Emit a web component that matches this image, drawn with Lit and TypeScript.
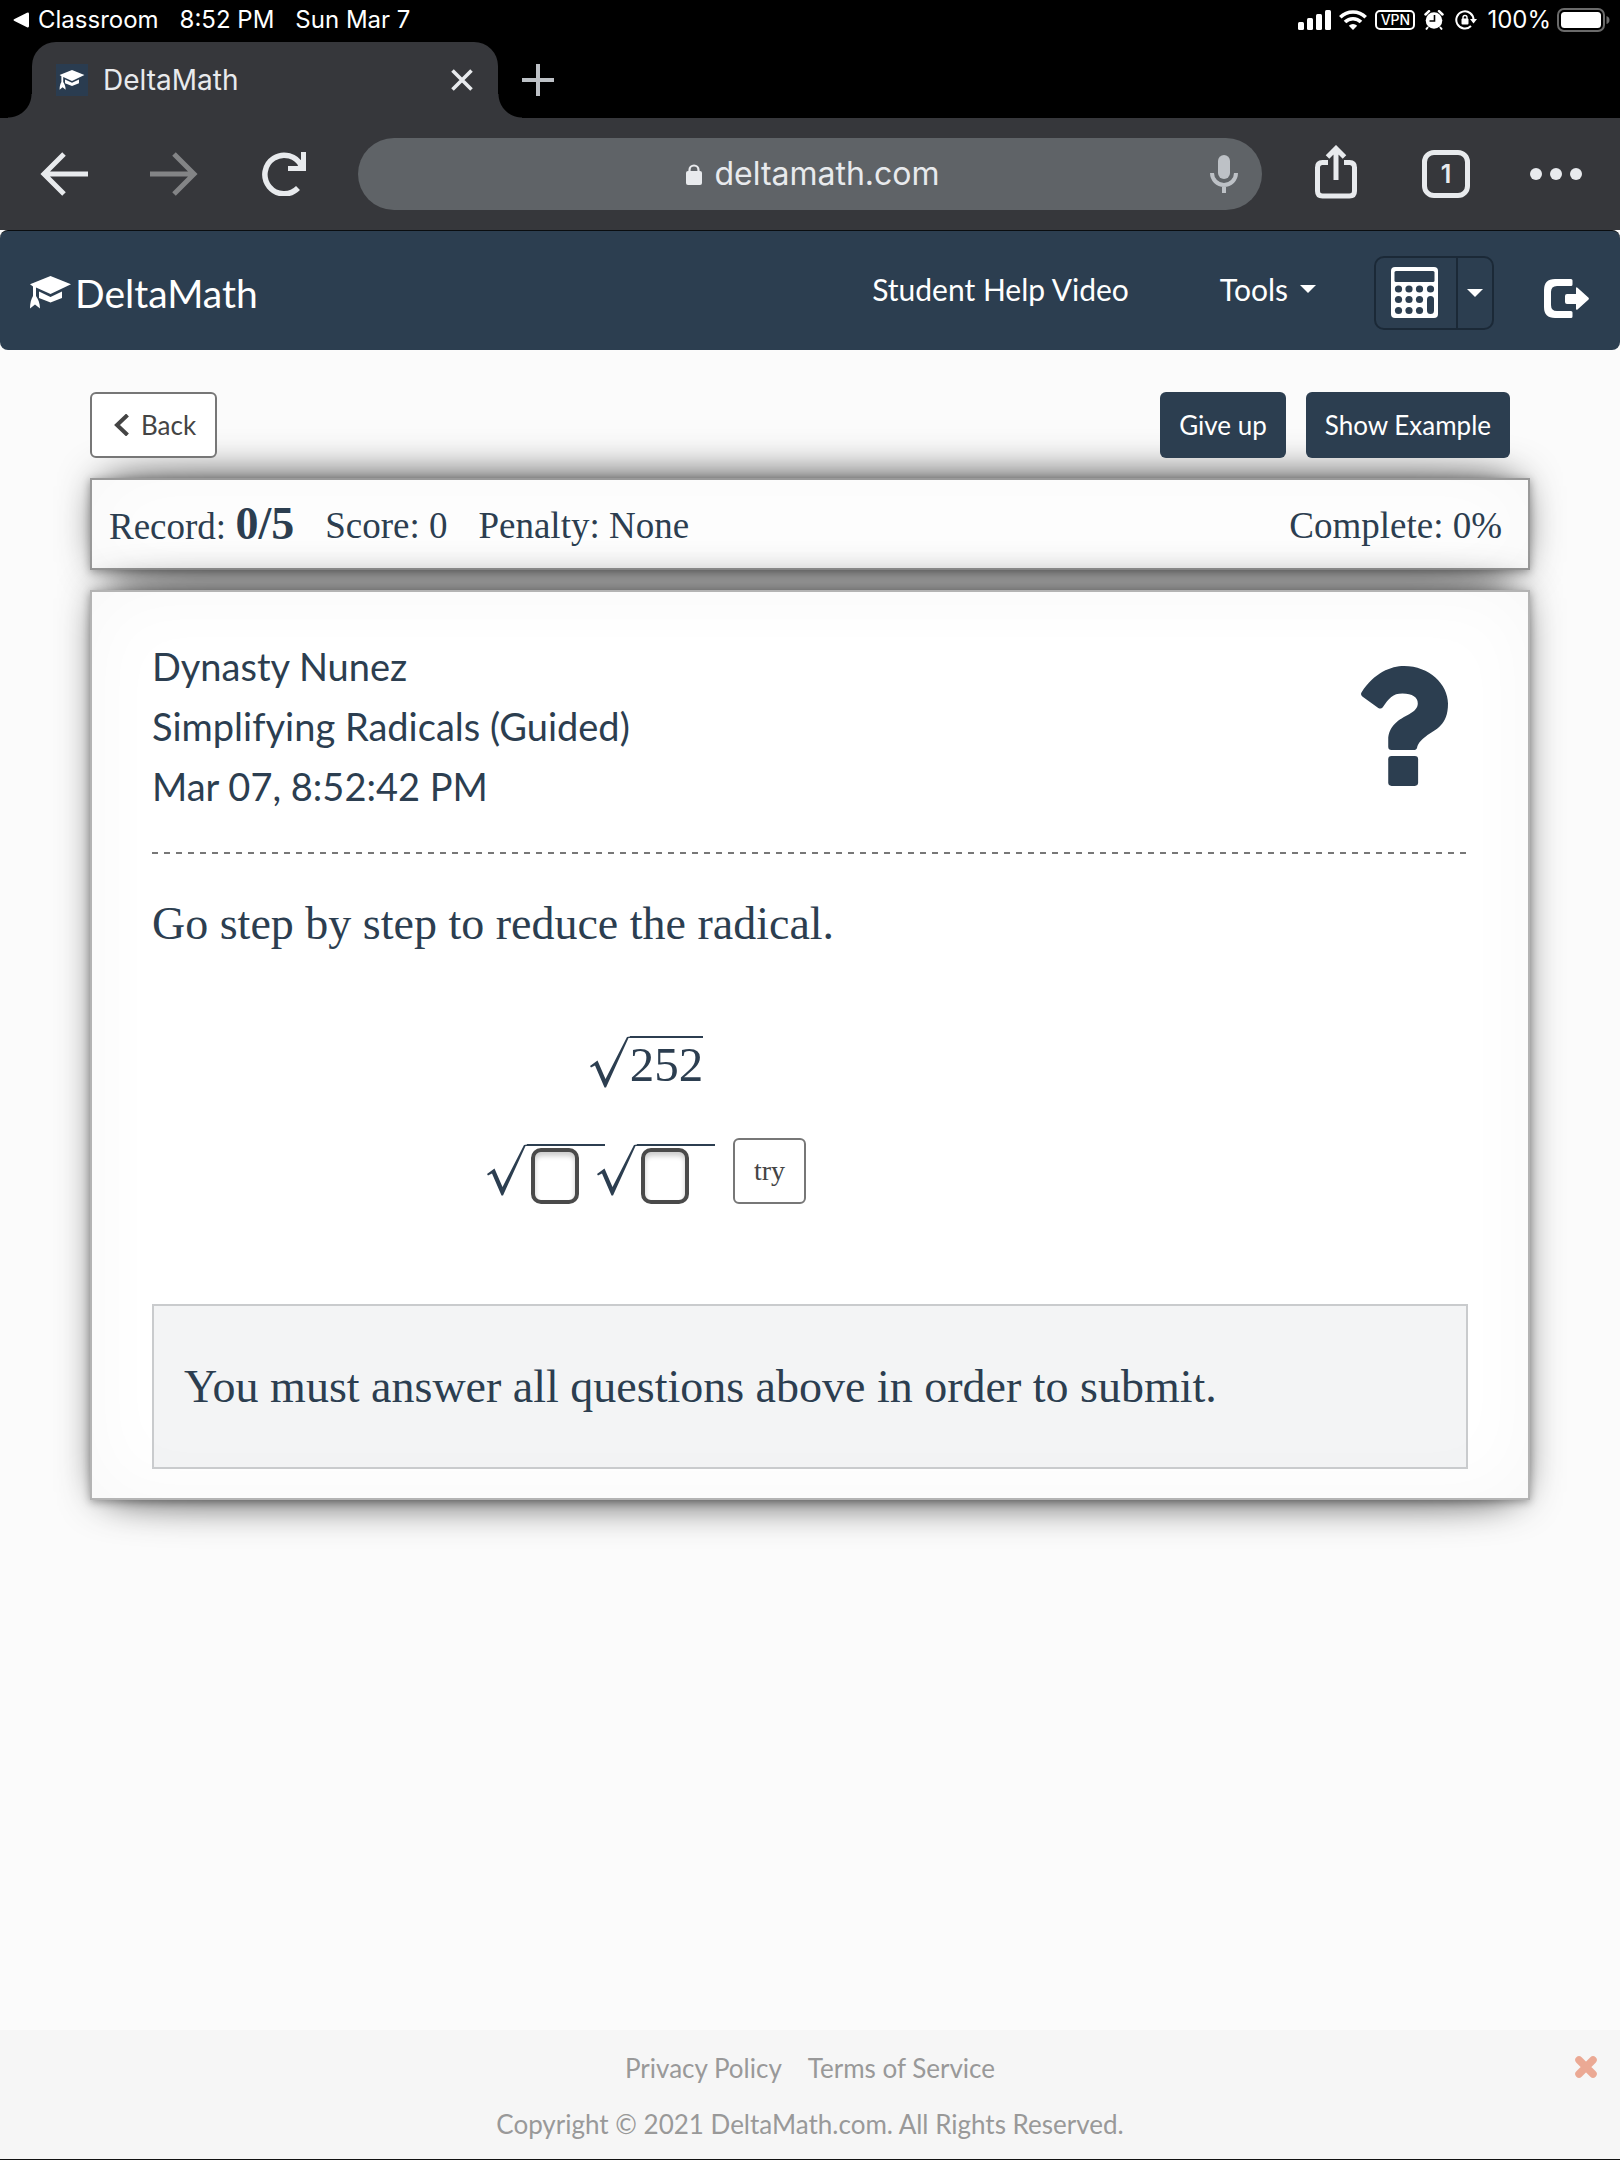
import { LitElement, html, css, svg } from "lit";
import { customElement, property } from "lit/decorators.js";

const cap = svg`
  <path d="M20.5 0 41 8.3 20.5 18 6 11.5V20c2 3 4 7 4 12.5L5 28.5 0 32.5C0 27 1.200 23 3 20V10.500L0 8.300Z"/>
  <path d="M9 15.500 20.500 21 32 15.500V22L20.500 26.500 9 22Z"/>`;

@customElement("browser-chrome")
export class BrowserChrome extends LitElement {
  static styles = css`
    :host { display: block; background: #000; color: #fff; font-family: Inter, "Liberation Sans", sans-serif; }
    * { box-sizing: border-box; }
    button { background: none; border: 0; padding: 0; margin: 0; color: inherit; font: inherit; }
    svg { display: block; flex: none; }
    .status { display: flex; align-items: center; height: 42px; padding: 0 10px 2px 13px; font-size: 24px; line-height: 28px; }
    .back-app { display: flex; align-items: center; gap: 9px; }
    .clock { margin-left: 21px; }
    .date { margin-left: 21px; }
    .indicators { display: flex; align-items: center; margin-left: auto; }
    .wifi { margin-left: 8px; }
    .vpn { display: flex; align-items: center; justify-content: center; width: 40px; height: 20px; margin-left: 8px; border: 2px solid #fff; border-radius: 5px; font-size: 14px; font-weight: 500; }
    .alarm { margin-left: 9px; }
    .rotation { margin-left: 11px; }
    .percent { margin-left: 10px; }
    .battery { margin-left: 6px; }
    .strip { display: flex; align-items: flex-end; padding-left: 8px; }
    .flare { width: 24px; height: 24px; }
    .flare.left { background: radial-gradient(circle at 0 0, #000 23px, #36373b 24px); }
    .flare.right { background: radial-gradient(circle at 100% 0, #000 23px, #36373b 24px); }
    .tab { display: flex; align-items: center; width: 466px; height: 76px; padding: 0 25px 0 24px; background: #36373b; border-radius: 24px 24px 0 0; color: #e8eaed; font-size: 28px; }
    .favicon { display: flex; align-items: center; justify-content: center; width: 32px; height: 32px; margin-right: 15px; background: #2a3c50; }
    .close { margin-left: auto; }
    .plus { align-self: center; }
    .toolbar { display: flex; align-items: center; height: 112px; padding: 0 9px; background: #36373b; color: #e8eaed; }
    .tool { display: flex; align-items: center; justify-content: center; width: 110px; height: 72px; flex: none; }
    .tool:disabled { color: #838486; }
    .omnibox { display: flex; flex: 1; align-items: center; height: 72px; margin: 0 19px; border-radius: 36px; background: #5f6367; padding-left: 82px; }
    .address { display: flex; flex: 1; align-items: center; justify-content: center; gap: 12px; font-size: 32px; line-height: 40px; }
    .mic { display: flex; justify-content: center; width: 76px; color: #bdc1c6; }
    .count { display: flex; align-items: center; justify-content: center; width: 48px; height: 48px; border: 5px solid currentColor; border-radius: 12px; font-size: 25px; font-weight: 600; }
  `;

  render() {
    return html`
      <div class="status">
        <span class="back-app">
          <svg width="16" height="16" viewBox="0 0 16 16" fill="#fff"><path d="M1.500 7 14 .7q2-.8 2 1.200v12.200q0 2-2 1.200L1.500 9q-2-1 0-2Z"/></svg>
          Classroom
        </span>
        <span class="clock">8:52 PM</span>
        <span class="date">Sun Mar 7</span>
        <span class="indicators">
          <svg width="33" height="20" viewBox="0 0 33 20" fill="#fff"><rect y="12" width="6" height="8" rx="1.500"/><rect x="9" y="8" width="6" height="12" rx="1.500"/><rect x="18" y="4" width="6" height="16" rx="1.500"/><rect x="27" width="6" height="20" rx="1.500"/></svg>
          <svg class="wifi" width="28" height="20" viewBox="0 0 28 20" fill="none" stroke="#fff" stroke-width="3.600"><path d="M1.300 7.300a18 18 0 0 1 25.400 0M6 12a11.300 11.300 0 0 1 16 0"/><path d="M14 20 9.800 15.800a6 6 0 0 1 8.400 0Z" fill="#fff" stroke="none"/></svg>
          <span class="vpn">VPN</span>
          <svg class="alarm" width="20" height="20" viewBox="0 0 20 20"><circle cx="10" cy="10.500" r="8.300" fill="#fff"/><path d="M1.500 4.500 5 1.200M18.500 4.500 15 1.200" stroke="#fff" stroke-width="2.500" stroke-linecap="round"/><path d="m4 17-2 2.500M16 17l2 2.500" stroke="#fff" stroke-width="2"/><path d="M10.500 5v6H5.500" fill="none" stroke="#000" stroke-width="1.600"/></svg>
          <svg class="rotation" width="22" height="20" viewBox="0 0 22 20" fill="none" stroke="#fff" stroke-width="2"><path d="M16 16a8.600 8.600 0 1 1 2.500-6"/><path d="M15 9h7l-3.500 4.500Z" fill="#fff" stroke="none"/><rect x="6.500" y="8.500" width="7" height="6" rx="1" fill="#fff" stroke="none"/><path d="M8 9V7.500a2 2 0 0 1 4 0V9" stroke-width="1.400"/></svg>
          <span class="percent">100%</span>
          <svg class="battery" width="53" height="24" viewBox="0 0 53 24"><rect x="1" y="1" width="46" height="22" rx="6" fill="none" stroke="#6a6a6a" stroke-width="2"/><rect x="4" y="4" width="40" height="16" rx="3.500" fill="#fff"/><path d="M49.500 8v8q3-1 3-4t-3-4Z" fill="#6a6a6a"/></svg>
        </span>
      </div>
      <div class="strip">
        <span class="flare left"></span>
        <div class="tab">
          <span class="favicon"><svg width="26" height="20" viewBox="0 0 41 33" fill="#fff">${cap}</svg></span>
          <span>DeltaMath</span>
          <button class="close" aria-label="Close tab"><svg width="22" height="22" viewBox="0 0 22 22" stroke="currentColor" stroke-width="3.600"><path d="m1.500 1.500 19 19M20.500 1.500l-19 19"/></svg></button>
        </div>
        <span class="flare right"></span>
        <button class="plus" aria-label="New tab"><svg width="32" height="32" viewBox="0 0 32 32" stroke="#bdc1c6" stroke-width="4"><path d="M16 0v32M0 16h32"/></svg></button>
      </div>
      <div class="toolbar">
        <button class="tool" aria-label="Back"><svg width="48" height="44" viewBox="0 0 48 44" fill="none" stroke="currentColor" stroke-width="5"><path d="M48 22H4M24 2 4 22l20 20"/></svg></button>
        <button class="tool" aria-label="Forward" disabled><svg width="48" height="44" viewBox="0 0 48 44" fill="none" stroke="currentColor" stroke-width="5"><path d="M0 22h44M24 2l20 20-20 20"/></svg></button>
        <button class="tool" aria-label="Reload"><svg width="44" height="44" viewBox="0 0 44 44" fill="none" stroke="currentColor" stroke-width="5.500"><path d="M36 36A19.300 19.300 0 1 1 39.500 14"/><path d="M44 0v19H26v-5h9.500L39 11V0Z" fill="currentColor" stroke="none"/></svg></button>
        <div class="omnibox">
          <button class="address">
            <svg width="16" height="21" viewBox="0 0 16 21"><rect y="7" width="16" height="14" rx="2" fill="currentColor"/><path d="M3.500 8V6a4.500 4.500 0 0 1 9 0v2" fill="none" stroke="currentColor" stroke-width="2.200"/></svg>
            deltamath.com
          </button>
          <button class="mic" aria-label="Voice search"><svg width="28" height="38" viewBox="0 0 28 38" fill="none" stroke="currentColor" stroke-width="4"><rect x="8" width="12" height="24" rx="6" fill="currentColor" stroke="none"/><path d="M2 18a12 12 0 0 0 24 0M14 30v8"/></svg></button>
        </div>
        <button class="tool" aria-label="Share"><svg width="42" height="58" viewBox="0 0 42 58" fill="none" stroke="currentColor" stroke-width="5"><path d="M13 17.500H7.500q-5 0-5 5V46q0 5 5 5h27q5 0 5-5V22.500q0-5-5-5H29M21 35V4M12.500 12 21 3.500 29.500 12"/></svg></button>
        <button class="tool" aria-label="Tabs"><span class="count">1</span></button>
        <button class="tool" aria-label="More"><svg width="52" height="12" viewBox="0 0 52 12" fill="currentColor"><circle cx="6" cy="6" r="6"/><circle cx="26" cy="6" r="6"/><circle cx="46" cy="6" r="6"/></svg></button>
      </div>
    `;
  }
}

@customElement("radical-sign")
export class RadicalSign extends LitElement {
  static styles = css`
    :host { display: inline-flex; align-items: flex-start; }
    svg { display: block; flex: none; }
    .under { display: block; border-top: 2px solid #2c3e50; }
  `;
  render() {
    return html`<svg width="40" height="52" viewBox="0 0 40 52"><path d="M0 30 7.500 24.500 15.500 43 37 1l3-.5V2h-1.500L16 51.500h-1.500L5 29.500 1 31.500Z" fill="#2c3e50"/></svg><span class="under"><slot></slot></span>`;
  }
}

@customElement("app-root")
export class AppRoot extends LitElement {
  @property() student = "Dynasty Nunez";

  static styles = css`
    :host { display: flex; flex-direction: column; min-height: 100vh; box-sizing: border-box; background: #fbfbfb; color: #2c3e50; border-bottom: 1px solid #111; font-family: Lato, "Open Sans", sans-serif; }
    * { box-sizing: border-box; }
    button { margin: 0; font: inherit; }
    a { color: inherit; text-decoration: none; }
    svg { display: block; flex: none; }
    .navbar { display: flex; align-items: center; min-height: 120px; padding: 0 31px 0 30px; border-top: 1px solid #0a0d10; background: #2c3e50; border-radius: 8px; color: #fff; font-size: 30px; line-height: 36px; }
    .brand { display: flex; align-items: center; gap: 4px; margin-right: auto; font-size: 39px; line-height: 48px; padding-top: 4px; }
    .plain { display: flex; align-items: center; background: none; border: 0; padding: 0; color: inherit; }
    .link { padding-bottom: 3px; }
    .tools { gap: 12px; margin-left: 91px; }
    .calc { display: flex; height: 74px; margin: 4px 0 0 58px; border: 2px solid #1b2937; border-radius: 10px; }
    .calc-main { justify-content: center; width: 82px; padding-right: 18px; padding-left: 15px; border-right: 2px solid #1b2937; }
    .calc-more { justify-content: center; width: 34px; }
    .logout { margin-left: 50px; padding-top: 16px; }
    .page { width: 100%; padding: 42px 90px 0; }
    .actions { display: flex; gap: 20px; padding-right: 20px; margin-bottom: 20px; position: relative; z-index: 1; }
    .btn { display: flex; align-items: center; gap: 12px; height: 66px; padding: 0 19px; border: 0; border-radius: 6px; background: #2c3e50; color: #fff; font-size: 26px; line-height: 32px; }
    .btn.outline { border: 2px solid #777; background: #fff; color: #444; padding: 0 19px 0 22px; }
    .back { margin-right: auto; }
    .sheet { position: relative; z-index: 0; }
    .sheet::before { content: ""; position: absolute; z-index: -1; inset: 0 12px; border-radius: 100px / 10px; box-shadow: 0 0 40px rgba(0, 0, 0, 0.8); }
    .paper { border: 2px solid #999; background: #fff; box-shadow: 0 2px 8px rgba(0, 0, 0, 0.3), 0 0 80px rgba(0, 0, 0, 0.03) inset; }
    .record { display: flex; align-items: center; gap: 31px; min-height: 92px; padding: 3px 26px 0 17px; font-family: Georgia, "Liberation Serif", serif; font-size: 37px; line-height: 44px; }
    .record strong { font-size: 46px; }
    .complete { margin-left: auto; }
    .question { margin-top: 20px; padding: 44px 60px 29px; border-color: #b4b4b4; }
    .heading { display: flex; align-items: center; justify-content: space-between; padding: 0 20px 36px 0; }
    .meta { font-size: 38px; font-weight: 400; line-height: 60px; }
    .rule { height: 2px; background: repeating-linear-gradient(90deg, #777 0 6px, transparent 6px 12px); }
    .prompt { margin: 40px 0 80px; font-family: Georgia, "Liberation Serif", serif; font-size: 46px; font-weight: 400; line-height: 60px; }
    .math { display: flex; flex-direction: column; align-items: center; width: 75%; padding-left: 2px; font-family: "Liberation Serif", serif; }
    .number { height: 104px; padding-top: 2px; font-size: 49px; line-height: 54px; }
    .attempt { display: flex; align-items: flex-start; }
    .factors { display: flex; padding-top: 6px; }
    .second { margin-left: -8px; }
    .box { display: block; width: 48px; height: 56px; margin: 2px 26px 0 4px; padding: 0; border: 4px solid #4a4a4a; border-radius: 10px; background: #fff; box-shadow: inset 0 4px 5px rgba(0, 0, 0, 0.2); color: inherit; font: 32px "Liberation Serif", serif; text-align: center; }
    .btn.try { margin-left: 18px; padding: 0 19px; font-family: Georgia, "Liberation Serif", serif; font-size: 28px; }
    .notice { margin-top: 100px; padding: 50px 30px; border: 2px solid #c9cbcd; background: rgba(44, 62, 80, 0.06); font-family: Georgia, "Liberation Serif", serif; font-size: 46px; line-height: 61px; }
    .footer { display: grid; grid-template-columns: 1fr auto 1fr; min-height: 129px; margin-top: auto; padding: 10px 22px 0; background: #f6f6f6; color: #999; font-size: 26px; line-height: 56px; text-align: center; }
    .footer p { margin: 0; }
    .links { display: flex; justify-content: center; gap: 26px; }
    .dismiss { justify-self: end; align-self: start; grid-column: 3; padding-top: 15px; }
    .legal { grid-column: 2; }
  `;

  private caret() {
    return html`<svg width="16" height="8" viewBox="0 0 16 8" fill="#fff"><path d="M0 0h16L8 8Z"/></svg>`;
  }

  render() {
    return html`
      <browser-chrome></browser-chrome>
      <nav class="navbar">
        <a class="brand" href="#"><svg width="41" height="33" viewBox="0 0 41 33" fill="#fff">${cap}</svg>DeltaMath</a>
        <a class="link" href="#">Student Help Video</a>
        <button class="plain link tools">Tools ${this.caret()}</button>
        <div class="calc">
          <button class="plain calc-main" aria-label="Calculator">
            <svg width="47" height="51" viewBox="0 0 47 51"><rect width="47" height="51" rx="4" fill="#fff"/><g fill="#2c3e50"><rect x="3.500" y="4" width="40" height="11" rx="1.500"/>${[7.5, 18, 28.5].map((x) => [22, 32.5, 43.5].map((y) => svg`<circle cx=${x} cy=${y} r="3.600"/>`))}<circle cx="39.500" cy="22" r="3.600"/><rect x="36" y="29" width="7" height="18" rx="3.500"/></g></svg>
          </button>
          <button class="plain calc-more" aria-label="Calculator options">${this.caret()}</button>
        </div>
        <button class="plain logout" aria-label="Log out">
          <svg width="45" height="39" viewBox="0 0 45 39" fill="#fff"><path d="M27 0q1.500 0 1.500 1.500v4Q28.500 7 27 7H13q-6 0-6 6v13q0 6 6 6h14q1.500 0 1.500 1.500v4q0 1.500-1.500 1.500H11Q0 39 0 28V11Q0 0 11 0Z"/><path d="M32 9.500q0-2 1.500-.8L44.300 18.500q1.200 1.200 0 2.300L33.500 30.500q-1.500 1-1.500-.8V25h-9q-2 0-2-2v-6q0-2 2-2h9Z"/></svg>
        </button>
      </nav>

      <main class="page">
        <div class="actions">
          <button class="btn outline back"><svg width="15" height="22" viewBox="0 0 15 22" fill="none" stroke="#444" stroke-width="4"><path d="M13.500 1 3 11l10.500 10"/></svg>Back</button>
          <button class="btn">Give up</button>
          <button class="btn">Show Example</button>
        </div>

        <div class="sheet">
          <section class="paper record">
            <span>Record: <strong>0/5</strong></span>
            <span>Score: 0</span>
            <span>Penalty: None</span>
            <span class="complete">Complete: 0%</span>
          </section>
        </div>

        <div class="sheet">
          <section class="paper question">
            <header class="heading">
              <div class="meta">
                <div>${this.student}</div>
                <div>Simplifying Radicals (Guided)</div>
                <div>Mar 07, 8:52:42 PM</div>
              </div>
              <svg width="87" height="120" viewBox="0 0 262 361" fill="#2c3e50"><path d="M1 80C40 20 90 0 130 0c75 0 132 55 132 113 0 67-37 77-67 99-17 12-24 24-26 33q-2 8-11 8H92q-10 0-10-10v-21c0-42 33-62 63-77 20-12 26-20 26-33 0-17-16-29-46-29-30 0-40 14-60 42q-5 5-13 1L4 92q-6-5-3-12Z"/><rect x="82" y="271" width="90" height="90" rx="10"/></svg>
            </header>
            <div class="rule"></div>
            <h1 class="prompt">Go step by step to reduce the radical.</h1>
            <div class="math">
              <div class="number"><radical-sign>252</radical-sign></div>
              <div class="attempt">
                <div class="factors">
                  <radical-sign><input class="box" aria-label="First factor" /></radical-sign>
                  <radical-sign class="second"><input class="box" aria-label="Second factor" /></radical-sign>
                </div>
                <button class="btn outline try">try</button>
              </div>
            </div>
            <div class="notice">You must answer all questions above in order to submit.</div>
          </section>
        </div>
      </main>

      <footer class="footer">
        <div class="legal">
          <div class="links"><a href="#">Privacy Policy</a><a href="#">Terms of Service</a></div>
          <p>Copyright © 2021 DeltaMath.com. All Rights Reserved.</p>
        </div>
        <button class="plain dismiss" aria-label="Dismiss"><svg width="24" height="24" viewBox="0 0 24 24" stroke="#eba994" stroke-width="7.500" stroke-linecap="round"><path d="m5 5 14 14M19 5 5 19"/></svg></button>
      </footer>
    `;
  }
}
